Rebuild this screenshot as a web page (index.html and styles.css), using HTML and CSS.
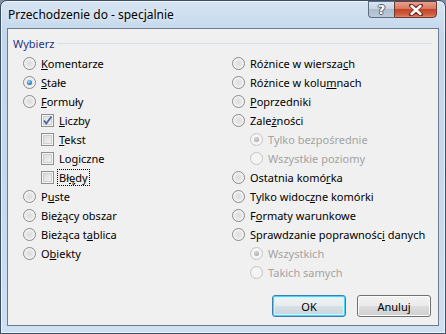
FILE: index.html
```html
<!DOCTYPE html>
<html lang="pl">
<head>
<meta charset="utf-8">
<link rel="stylesheet" href="styles.css">
</head>
<body>
<div class="window">
  <div class="titlebar">
    <span class="title">Przechodzenie do - specjalnie</span>
    <div class="caption-btns">
      <div class="cbtn help"><span class="q">?</span></div>
      <div class="cbtn close">
        <svg width="16" height="12" viewBox="0 0 16 12"><path d="M3 1.5 L8 5 L13 1.5 M3 10.5 L8 7 L13 10.5 M3 1.5 L13 10.5 M13 1.5 L3 10.5" fill="none" stroke="#6b2a22" stroke-width="4" stroke-linecap="round"/><path d="M3.5 2 L12.5 10 M12.5 2 L3.5 10" fill="none" stroke="#fff" stroke-width="2.4" stroke-linecap="round"/></svg>
      </div>
    </div>
  </div>
  <div class="client">
    <div class="group-head"><span class="glabel">Wybierz</span><span class="gline"></span></div>
    <div class="cols">
      <div class="col">
        <div class="row"><span class="radio"></span><span><u>K</u>omentarze</span></div>
        <div class="row"><span class="radio on"></span><span><u>S</u>tałe</span></div>
        <div class="row"><span class="radio"></span><span><u>F</u>ormuły</span></div>
        <div class="row sub"><span class="check on"><svg width="11" height="11" viewBox="0 0 11 11"><path d="M2 5.5 L4.3 8.5 L9.5 1.5" fill="none" stroke="#4b64a8" stroke-width="1.8"/></svg></span><span><u>L</u>iczby</span></div>
        <div class="row sub"><span class="check"></span><span><u>T</u>ekst</span></div>
        <div class="row sub"><span class="check"></span><span>Lo<u>g</u>iczne</span></div>
        <div class="row sub"><span class="check"></span><span class="focus">Bł<u>ę</u>dy</span></div>
        <div class="row"><span class="radio"></span><span>P<u>u</u>ste</span></div>
        <div class="row"><span class="radio"></span><span>Bie<u>ż</u>ący obszar</span></div>
        <div class="row"><span class="radio"></span><span>Bieżąca t<u>a</u>blica</span></div>
        <div class="row"><span class="radio"></span><span>O<u>b</u>iekty</span></div>
      </div>
      <div class="col">
        <div class="row"><span class="radio"></span><span>Różnice w wiersza<u>c</u>h</span></div>
        <div class="row"><span class="radio"></span><span>Różnice w kolu<u>m</u>nach</span></div>
        <div class="row"><span class="radio"></span><span><u>P</u>oprzedniki</span></div>
        <div class="row"><span class="radio"></span><span>Zale<u>ż</u>ności</span></div>
        <div class="row sub dis"><span class="radio on"></span><span>Tylko bezpośrednie</span></div>
        <div class="row sub dis"><span class="radio"></span><span>Wszystkie poziomy</span></div>
        <div class="row"><span class="radio"></span><span>Ostatnia komó<u>r</u>ka</span></div>
        <div class="row"><span class="radio"></span><span>Tylko widoc<u>z</u>ne komórki</span></div>
        <div class="row"><span class="radio"></span><span>F<u>o</u>rmaty warunkowe</span></div>
        <div class="row"><span class="radio"></span><span>Sprawdzanie poprawnośc<u>i</u> danych</span></div>
        <div class="row sub dis"><span class="radio on"></span><span>Wszystkich</span></div>
        <div class="row sub dis"><span class="radio"></span><span>Takich samych</span></div>
      </div>
    </div>
    <div class="buttons">
      <button class="btn default">OK</button>
      <button class="btn">Anuluj</button>
    </div>
  </div>
</div>
</body>
</html>
```
FILE: styles.css
```css
* { box-sizing: border-box; }
html, body { margin: 0; padding: 0; }
body {
  width: 446px;
  height: 334px;
  overflow: hidden;
  font-family: "Noto Sans", "DejaVu Sans", sans-serif;
  font-size: 11px;
  color: #000;
  background: #7d8fa3;
}
.window {
  width: 446px;
  height: 334px;
  border: 1px solid #3c4f66;
  border-radius: 7px 7px 0 0;
  background: linear-gradient(180deg, #d6e4f2 0%, #c3d7ec 10%, #c6d9ee 60%, #cfe0f2 100%);
  display: flex;
  flex-direction: column;
  padding: 0 6px 7px 6px;
  box-shadow: inset 0 0 0 1px rgba(255,255,255,0.6);
}
.titlebar {
  height: 27px;
  display: flex;
  align-items: flex-start;
  justify-content: space-between;
}
.title {
  margin-top: 5px;
  margin-left: 1px;
  font-size: 12px;
  color: #000;
  text-shadow: 0 0 6px rgba(255,255,255,0.9);
}
.caption-btns {
  display: flex;
  margin-right: 2px;
}
.cbtn {
  height: 17px;
  border: 1px solid #5d6e83;
  display: flex;
  align-items: center;
  justify-content: center;
}
.help {
  width: 26px;
  border-right: none;
  border-radius: 0 0 0 4px;
  background: linear-gradient(180deg, #dce6f1 0%, #c7d4e2 45%, #aebcce 50%, #bccbdc 100%);
}
.q {
  font-family: "DejaVu Sans", sans-serif;
  font-weight: bold;
  font-size: 13px;
  line-height: 13px;
  color: #fff;
  text-shadow: -1px 0 #4f5b6b, 1px 0 #4f5b6b, 0 -1px #4f5b6b, 0 1px #4f5b6b;
}
.close {
  width: 43px;
  border-radius: 0 0 4px 0;
  background: linear-gradient(180deg, #e7a18f 0%, #d8765f 45%, #c3442a 50%, #d0603f 85%, #e2876a 100%);
  border-color: #6b3a30;
}
.client {
  flex: 1;
  background: #f0f0f0;
  border: 1px solid #6d7b8c;
  display: flex;
  flex-direction: column;
  padding: 6px 6px 0 5px;
  position: relative;
}
.group-head {
  display: flex;
  align-items: center;
  height: 16px;
}
.glabel {
  color: #1e3287;
  padding-right: 3px;
}
.gline {
  flex: 1;
  height: 1px;
  background: #d5dfe5;
  margin-top: 1px;
}
.cols {
  display: grid;
  grid-template-columns: 209px 1fr;
  margin-top: 3px;
  padding-left: 10px;
}
.row {
  height: 19px;
  display: flex;
  align-items: center;
  gap: 4px;
  white-space: nowrap;
}
.row.sub { padding-left: 18px; }
.row.dis { color: #a3a3a3; }
u { text-decoration: underline; text-underline-offset: 1px; }
.radio {
  width: 13px;
  height: 13px;
  border-radius: 50%;
  border: 1px solid #8a8a8a;
  background: radial-gradient(circle at 50% 50%, #dcdcdc 0%, #e8e8e8 45%, #f6f6f6 70%, #fbfbfb 100%);
  box-shadow: inset 0 0 0 1px #f4f4f4;
  position: relative;
  flex: none;
  margin-right: 1px;
}
.radio.on::after {
  content: "";
  position: absolute;
  left: 3px;
  top: 3px;
  width: 5px;
  height: 5px;
  border-radius: 50%;
  background: radial-gradient(circle at 40% 35%, #a6e0ff 0%, #3f91c9 50%, #1b4f85 100%);
}
.dis .radio {
  border-color: #c4c4c4;
  background: #f4f4f4;
  box-shadow: none;
}
.dis .radio.on::after {
  background: radial-gradient(circle at 40% 35%, #d9d9d9 0%, #b4b4b4 60%, #9c9c9c 100%);
}
.check {
  width: 13px;
  height: 13px;
  border: 1px solid #8e8f8f;
  background: linear-gradient(135deg, #d4d4d4 0%, #eaeaea 60%, #f6f6f6 100%);
  box-shadow: inset 0 0 0 1px #f4f4f4, inset 0 0 0 2px #cfcfcf;
  flex: none;
  display: flex;
  align-items: center;
  justify-content: center;
  margin-right: 1px;
}
.check.on { background: linear-gradient(135deg, #e2e2e2 0%, #f2f2f2 100%); }
.focus {
  outline: 1px dotted #000;
  outline-offset: 0;
  padding: 0 1px;
  margin-left: -1px;
  line-height: 15px;
}
.buttons {
  position: absolute;
  right: 7px;
  bottom: 8px;
  display: flex;
  gap: 11px;
}
.btn {
  width: 74px;
  height: 22px;
  font-family: "Noto Sans", "DejaVu Sans", sans-serif;
  font-size: 11px;
  color: #000;
  border: 1px solid #707070;
  border-radius: 3px;
  background: linear-gradient(180deg, #f2f2f2 0%, #ebebeb 48%, #dddddd 52%, #cfcfcf 100%);
  box-shadow: inset 0 0 0 1px #fcfcfc;
  padding: 0;
}
.btn.default {
  border-color: #3c7fb1;
  box-shadow: inset 0 0 0 1px #48d5fb, inset 0 0 0 2px #d8f2fb;
  background: linear-gradient(180deg, #f0f4f6 0%, #e6ecef 48%, #d6dfe4 52%, #c9d5dc 100%);
}
```
